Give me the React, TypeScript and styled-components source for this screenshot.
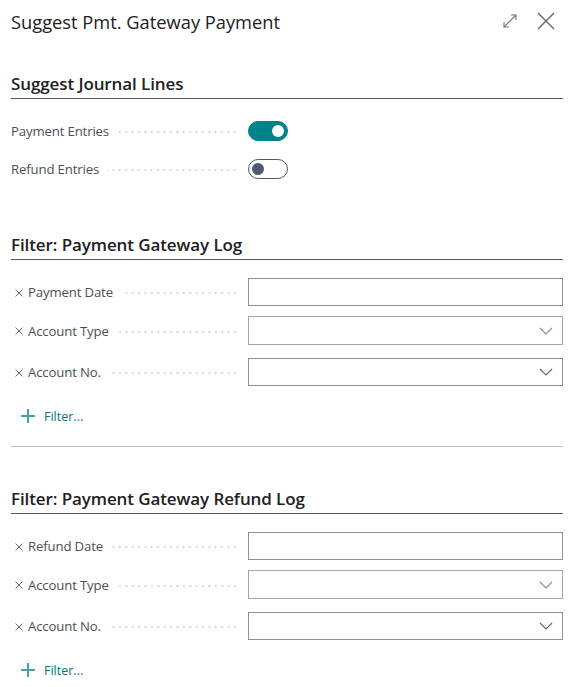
import React from "react";
import styled, { createGlobalStyle } from "styled-components";

const Global = createGlobalStyle`
  html, body { margin: 0; padding: 0; background: #fff; }
  body { font-family: "Open Sans", "Noto Sans", sans-serif; color: #212121; }
`;

const Page = styled.div`
  width: 571px;
  box-sizing: border-box;
  padding: 0 8px 0 11px;
`;

const Header = styled.div`
  display: flex;
  align-items: center;
  height: 42px;
  padding-right: 3px;
`;

const Title = styled.h1`
  flex: 1;
  margin: 0;
  font-size: 18.3px;
  font-weight: 400;
  color: #212121;
`;

const IconBtn = styled.button<{ $ml?: number }>`
  width: 28px;
  height: 30px;
  display: flex;
  align-items: center;
  justify-content: center;
  background: none;
  border: none;
  padding: 0;
  margin-left: ${(p) => p.$ml ?? 0}px;
`;

const Section = styled.section<{ $top: number }>`
  padding-top: ${(p) => p.$top}px;
`;

const SectionTitle = styled.h2`
  margin: 0;
  font-size: 17px;
  font-weight: 600;
  color: #212121;
  line-height: 22px;
  padding-bottom: 3px;
  border-bottom: 1px solid #505c6d;
  letter-spacing: -0.1px;
`;

const Rows = styled.div<{ $top: number }>`
  display: flex;
  flex-direction: column;
  padding-top: ${(p) => p.$top}px;
`;

const Row = styled.div<{ $h: number; $mb: number }>`
  display: flex;
  align-items: center;
  height: ${(p) => p.$h}px;
  margin-bottom: ${(p) => p.$mb}px;
`;

const LabelCell = styled.div`
  width: 227px;
  display: flex;
  align-items: center;
  margin-right: 10px;
  overflow: hidden;
`;

const Remove = styled.span`
  display: flex;
  align-items: center;
  margin: 1px 5px 0 4px;
`;

const Label = styled.span`
  font-size: 13.2px;
  color: #4a4f57;
  white-space: nowrap;
  letter-spacing: -0.15px;
`;

const Dots = styled.span`
  flex: 1;
  height: 2px;
  margin: 2px 0 0 8px;
  background-image: radial-gradient(circle, #cacaca 0.9px, transparent 1.1px);
  background-size: 6.4px 2px;
  background-repeat: repeat-x;
  background-position: right center;
`;

const Toggle = styled.span<{ $on: boolean }>`
  width: 40px;
  height: 20px;
  box-sizing: border-box;
  border-radius: 10px;
  display: flex;
  align-items: center;
  justify-content: ${(p) => (p.$on ? "flex-end" : "flex-start")};
  padding: 0 3px;
  background: ${(p) => (p.$on ? "#008489" : "#fff")};
  border: 1px solid ${(p) => (p.$on ? "#008489" : "#505c6d")};
`;

const Knob = styled.span<{ $on: boolean }>`
  width: 12px;
  height: 12px;
  border-radius: 50%;
  background: ${(p) => (p.$on ? "#fff" : "#505c6d")};
`;

const Field = styled.div<{ $light?: boolean }>`
  flex: 1;
  align-self: stretch;
  box-sizing: border-box;
  border: 1px solid ${(p) => (p.$light ? "#a6a6a6" : "#8a919c")};
  display: flex;
  align-items: center;
  justify-content: flex-end;
  padding-right: 9px;
`;

const FilterLink = styled.div`
  display: flex;
  align-items: center;
  height: 20px;
  padding-left: 9px;
  gap: 8px;
  font-size: 12.5px;
  color: #00787a;
`;

const Separator = styled.hr`
  border: none;
  border-top: 1px solid #c3c3c3;
  margin: 0;
`;

const ExpandIcon = () => (
  <svg width="16" height="16" viewBox="0 0 16 16" fill="none" stroke="#707070" strokeWidth="1.1">
    <path d="M2 14 L14 2" />
    <path d="M9 2 H14 V7" />
    <path d="M2 9 V14 H7" />
  </svg>
);

const CloseIcon = () => (
  <svg width="18" height="18" viewBox="0 0 18 18" fill="none" stroke="#666" strokeWidth="1.4">
    <path d="M1 1 L17 17 M17 1 L1 17" />
  </svg>
);

const RemoveIcon = () => (
  <svg width="8" height="8" viewBox="0 0 8 8" fill="none" stroke="#6b6b6b" strokeWidth="1">
    <path d="M0.5 0.5 L7.5 7.5 M7.5 0.5 L0.5 7.5" />
  </svg>
);

const Chevron = ({ light }: { light?: boolean }) => (
  <svg width="14" height="8" viewBox="0 0 14 8" fill="none" stroke={light ? "#8c8c8c" : "#5a6270"} strokeWidth="1.1">
    <path d="M1 1 L7 7 L13 1" />
  </svg>
);

const Plus = () => (
  <svg width="16" height="16" viewBox="0 0 16 16" fill="none" stroke="#45a3a2" strokeWidth="2">
    <path d="M8 1 V15 M1 8 H15" />
  </svg>
);

type FieldDef = { label: string; kind: "text" | "option" | "code" };

const ToggleRow = ({ label, on, mb }: { label: string; on: boolean; mb: number }) => (
  <Row $h={20} $mb={mb}>
    <LabelCell>
      <Label>{label}</Label>
      <Dots />
    </LabelCell>
    <Toggle $on={on}>
      <Knob $on={on} />
    </Toggle>
  </Row>
);

const FilterRows = ({ fields }: { fields: FieldDef[] }) => (
  <Rows $top={18}>
    {fields.map((f, i) => (
      <Row key={f.label} $h={f.kind === "option" ? 29 : 28} $mb={i === 0 ? 10 : i === 1 ? 13 : 20}>
        <LabelCell>
          <Remove><RemoveIcon /></Remove>
          <Label>{f.label}</Label>
          <Dots />
        </LabelCell>
        <Field $light={f.kind === "option"}>
          {f.kind !== "text" && <Chevron light={f.kind === "option"} />}
        </Field>
      </Row>
    ))}
    <FilterLink>
      <Plus />
      <span>Filter...</span>
    </FilterLink>
  </Rows>
);

export default function App() {
  return (
    <Page>
      <Global />
      <Header>
        <Title>Suggest Pmt. Gateway Payment</Title>
        <IconBtn aria-label="expand"><ExpandIcon /></IconBtn>
        <IconBtn aria-label="close" $ml={8}><CloseIcon /></IconBtn>
      </Header>

      <Section $top={31}>
        <SectionTitle>Suggest Journal Lines</SectionTitle>
        <Rows $top={22}>
          <ToggleRow label="Payment Entries" on={true} mb={18} />
          <ToggleRow label="Refund Entries" on={false} mb={0} />
        </Rows>
      </Section>

      <Section $top={55}>
        <SectionTitle>Filter: Payment Gateway Log</SectionTitle>
        <FilterRows
          fields={[
            { label: "Payment Date", kind: "text" },
            { label: "Account Type", kind: "option" },
            { label: "Account No.", kind: "code" },
          ]}
        />
      </Section>

      <Section $top={20}>
        <Separator />
      </Section>

      <Section $top={41}>
        <SectionTitle>Filter: Payment Gateway Refund Log</SectionTitle>
        <FilterRows
          fields={[
            { label: "Refund Date", kind: "text" },
            { label: "Account Type", kind: "option" },
            { label: "Account No.", kind: "code" },
          ]}
        />
      </Section>
    </Page>
  );
}
